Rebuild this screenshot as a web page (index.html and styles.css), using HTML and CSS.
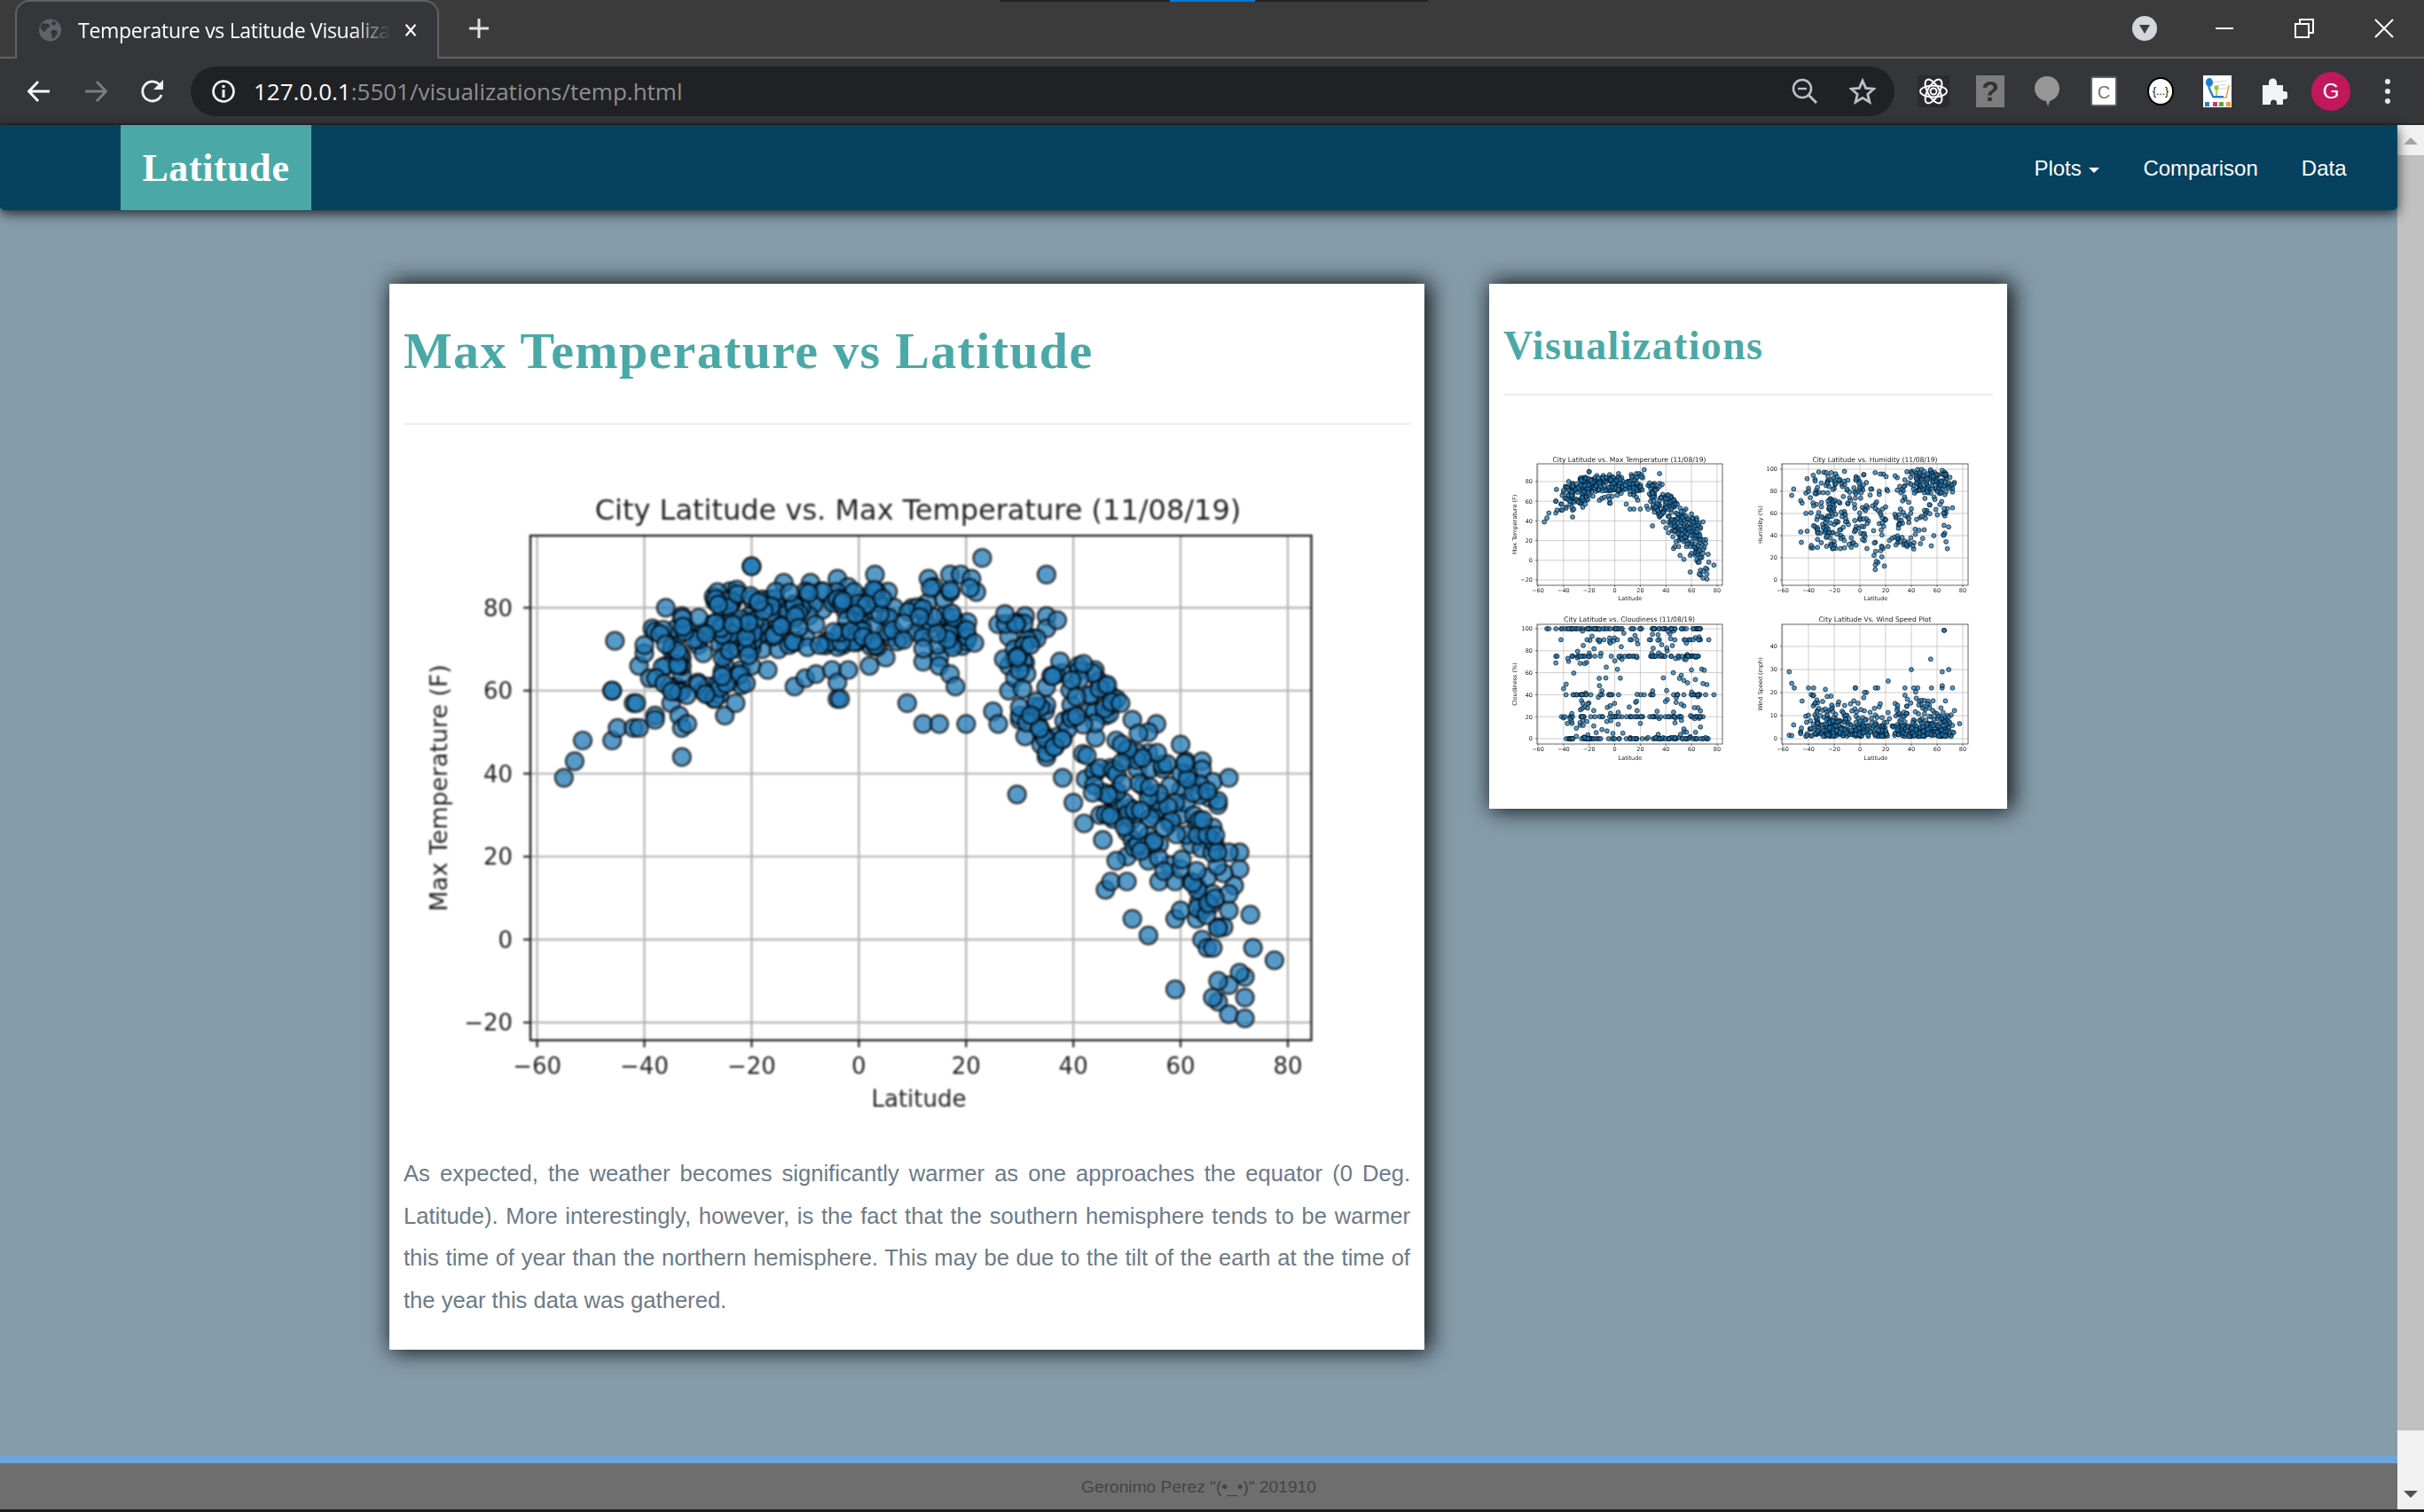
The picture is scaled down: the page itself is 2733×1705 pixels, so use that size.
FILE: index.html
```html
<!DOCTYPE html>
<html lang="en">
<head>
<meta charset="UTF-8" />
<title>Temperature vs Latitude Visualizations</title>
<link rel="stylesheet" href="styles.css">
</head>
<body>
<div class="window">
  <div class="loadbar"><span></span></div>

  <div class="tabstrip">
    <div class="tab">
      <svg class="favicon" width="28" height="28" viewBox="0 0 28 28">
        <circle cx="14" cy="14" r="14" fill="#5f6368"/>
        <path d="M6 5c3 1 5 0 7 2s-1 4-3 5-1 4-3 4-4-3-5-5 2-5 4-6zM17 14c3-1 5 0 6 2s-1 5-3 7-4 2-4 0 0-3-1-5 0-3 2-4zM17 2l5 3-2 3-4-1z" fill="#35363a"/>
      </svg>
      <span class="tab-title">Temperature vs Latitude Visualiza</span>
      <svg class="tab-close" width="18" height="18" viewBox="0 0 18 18"><path d="M3 2l12 14M15 2L3 16" stroke="#fff" stroke-width="2.4"/></svg>
    </div>
    <svg class="newtab" width="26" height="26" viewBox="0 0 26 26"><path d="M13 2v22M2 13h22" stroke="#dfe1e5" stroke-width="3"/></svg>
    <div class="winctl">
      <div class="winbtn"><svg width="28" height="28" viewBox="0 0 28 28"><circle cx="14" cy="14" r="14" fill="#d3d6da"/><path d="M8 10h12l-6 10z" fill="#3b3b3b"/></svg></div>
      <div class="winbtn"><svg width="20" height="4" viewBox="0 0 20 4"><path d="M0 2h20" stroke="#fff" stroke-width="2"/></svg></div>
      <div class="winbtn"><svg width="22" height="22" viewBox="0 0 22 22"><path d="M1 6h15v15H1zM6 6V1h15v15h-5" fill="none" stroke="#fff" stroke-width="2"/></svg></div>
      <div class="winbtn"><svg width="22" height="22" viewBox="0 0 22 22"><path d="M1 1l20 20M21 1L1 21" stroke="#fff" stroke-width="2"/></svg></div>
    </div>
  </div>

  <div class="toolbar">
    <div class="navbtn"><svg width="28" height="28" viewBox="0 0 28 28"><path d="M26 14H3M13 3L2.5 14 13 25" fill="none" stroke="#fff" stroke-width="2.8"/></svg></div>
    <div class="navbtn"><svg width="28" height="28" viewBox="0 0 28 28"><path d="M2 14h23M15 3l10.500 11L15 25" fill="none" stroke="#7c7d80" stroke-width="2.800"/></svg></div>
    <div class="navbtn"><svg width="30" height="30" viewBox="0 0 30 30"><path d="M25 19a11 11 0 1 1-1-10" fill="none" stroke="#f1f3f4" stroke-width="2.800"/><path d="M27 2v11H16z" fill="#f1f3f4"/></svg></div>
    <div class="omnibox">
      <svg width="28" height="28" viewBox="0 0 28 28"><circle cx="14" cy="14" r="11.500" fill="none" stroke="#f1f3f4" stroke-width="2.600"/><path d="M14 12v9" stroke="#f1f3f4" stroke-width="3"/><circle cx="14" cy="8.500" r="1.800" fill="#f1f3f4"/></svg>
      <div class="url">127.0.0.1<span class="url-rest">:5501/visualizations/temp.html</span></div>
      <svg class="omni-ico" width="30" height="30" viewBox="0 0 30 30"><circle cx="12" cy="12" r="10" fill="none" stroke="#bdc1c6" stroke-width="2.600"/><path d="M7 12h10" stroke="#bdc1c6" stroke-width="2.400"/><path d="M19 19l9 9" stroke="#bdc1c6" stroke-width="3"/></svg>
      <svg class="omni-ico" width="30" height="30" viewBox="0 0 30 30"><path d="M15 3l3.600 8.400 9.100.8-6.900 6 2.100 8.900L15 22.400l-7.900 4.700 2.100-8.900-6.900-6 9.100-.8z" fill="none" stroke="#bdc1c6" stroke-width="2.800"/></svg>
    </div>
    <div class="extensions">
      <div class="ext"><svg width="36" height="36" viewBox="0 0 36 36"><rect width="36" height="36" rx="3" fill="#2b2b2f"/><g fill="none" stroke="#fff" stroke-width="2"><ellipse cx="18" cy="18" rx="15" ry="6.500"/><ellipse cx="18" cy="18" rx="15" ry="6.500" transform="rotate(60 18 18)"/><ellipse cx="18" cy="18" rx="15" ry="6.500" transform="rotate(120 18 18)"/><circle cx="18" cy="18" r="3.500"/></g></svg></div>
      <div class="ext"><div class="ext-help">?</div></div>
      <div class="ext"><svg width="30" height="36" viewBox="0 0 30 36"><path d="M15 1c8 0 14 6 14 14 0 7-5 12-11 14l-2 6-2-6C7 28 1 22 1 15 1 7 7 1 15 1z" fill="#979797"/></svg></div>
      <div class="ext"><div class="ext-note">C</div></div>
      <div class="ext"><div class="ext-json">{...}</div></div>
      <div class="ext"><svg width="32" height="36" viewBox="0 0 32 36"><rect width="32" height="36" fill="#fff"/><path d="M10 8l16-2M12 12l15-2M14 16l13-2" stroke="#cfd8d0" stroke-width="1"/><path d="M7 13l5 12h14l3-14" fill="none" stroke="#f09a3e" stroke-width="1.500"/><ellipse cx="7" cy="8" rx="4" ry="5" fill="#1b7fd0"/><path d="M6 13l5 11h12" fill="none" stroke="#1b7fd0" stroke-width="2"/><circle cx="15" cy="14" r="2.500" fill="#8cc63f"/><path d="M15 16v7" stroke="#8cc63f" stroke-width="1.500"/><rect x="2" y="30" width="5" height="5" fill="#2b7fb8"/><rect x="11" y="30" width="5" height="5" fill="#c7337c"/><rect x="18" y="30" width="5" height="5" fill="#5aa53a"/><rect x="26" y="30" width="5" height="5" fill="#ef9a3c"/></svg></div>
      <div class="ext"><svg width="30" height="32" viewBox="0 0 30 32"><path d="M2 9h7V6a4.500 4.500 0 0 1 9 0v3h7v7h2a4.500 4.500 0 0 1 0 9h-2v6h-7v-2a3.500 3.500 0 0 0-7 0v2H2z" fill="#f1f3f4"/></svg></div>
      <div class="ext"><div class="avatar">G</div></div>
      <div class="ext"><svg width="8" height="30" viewBox="0 0 8 30"><circle cx="4" cy="4" r="3" fill="#e8eaed"/><circle cx="4" cy="15" r="3" fill="#e8eaed"/><circle cx="4" cy="26" r="3" fill="#e8eaed"/></svg></div>
    </div>
  </div>

  <div class="viewport">
    <div class="page">
      <nav class="navbar">
        <a class="brand">Latitude</a>
        <ul class="navlinks">
          <li>Plots <span class="caret"></span></li>
          <li>Comparison</li>
          <li>Data</li>
        </ul>
      </nav>

      <main class="content">
        <section class="card card-main">
          <h1>Max Temperature vs Latitude</h1>
          <hr />
          <div id="mainChart" class="main-chart"></div>
          <p>As expected, the weather becomes significantly warmer as one approaches the equator (0 Deg. Latitude). More interestingly, however, is the fact that the southern hemisphere tends to be warmer this time of year than the northern hemisphere. This may be due to the tilt of the earth at the time of the year this data was gathered.</p>
        </section>
        <aside class="card card-side">
          <h2>Visualizations</h2>
          <hr />
          <div class="thumbs">
            <div id="thumbTemp"></div>
            <div id="thumbHumidity"></div>
            <div id="thumbCloud"></div>
            <div id="thumbWind"></div>
          </div>
        </aside>
      </main>

      <footer class="footer">Geronimo Perez "(•_•)" 201910</footer>
    </div>
    <div class="scrollbar">
      <div class="sb-up"></div>
      <div class="sb-thumb"></div>
      <div class="sb-down"></div>
    </div>
  </div>
  <div class="taskbar"></div>
</div>
<script src="charts.js"></script>
</body>
</html>
```
FILE: styles.css
```css
* {
  box-sizing: border-box;
}
body {
  margin: 0;
  font-family: "Liberation Sans", Arial, sans-serif;
  background: #1d1d1d;
}
.window {
  position: relative;
  display: flex;
  flex-direction: column;
  height: 1705px;
  overflow: hidden;
}
.loadbar {
  position: absolute;
  top: 0;
  left: 1127px;
  width: 483px;
  height: 2px;
  background: #222;
}
.loadbar span {
  display: block;
  margin-left: 192px;
  width: 96px;
  height: 2px;
  background: #0a78d4;
}

/* browser frame */
.tabstrip {
  display: flex;
  align-items: center;
  height: 66px;
  padding-left: 17px;
  background: #3b3b3b;
  border-bottom: 2px solid #616265;
}
.tab {
  display: flex;
  align-items: center;
  width: 478px;
  height: 66px;
  margin-top: 1px;
  padding: 0 22px 0 25px;
  background: #35363a;
  border: 2px solid #616265;
  border-bottom: none;
  border-radius: 16px 16px 0 0;
}
.tab-title {
  flex: 1;
  margin-left: 19px;
  white-space: nowrap;
  color: #fff;
  font-family: "Open Sans", sans-serif;
  font-size: 23px;
  letter-spacing: -0.3px;
  -webkit-mask-image: linear-gradient(to right, #000 88%, transparent 100%);
  mask-image: linear-gradient(to right, #000 88%, transparent 100%);
}
.tab-close {
  margin-left: 15px;
}
.newtab {
  margin-left: 32px;
}
.winctl {
  display: flex;
  margin-left: auto;
}
.winbtn {
  display: flex;
  align-items: center;
  justify-content: center;
  width: 90px;
  height: 64px;
}
.toolbar {
  display: flex;
  align-items: center;
  height: 75px;
  padding-left: 12px;
  background: #35363a;
  border-bottom: 2px solid #2a2a2d;
}
.navbtn {
  display: flex;
  align-items: center;
  justify-content: center;
  width: 64px;
}
.omnibox {
  flex: 1;
  display: flex;
  align-items: center;
  gap: 35px;
  height: 56px;
  margin-left: 11px;
  padding: 0 21px 0 23px;
  background: #202124;
  border-radius: 28px;
}
.url {
  flex: 1;
  margin-left: -15px;
  color: #fff;
  font-family: "Open Sans", sans-serif;
  font-size: 26px;
  white-space: nowrap;
}
.url-rest {
  color: #8e8f91;
}
.extensions {
  display: flex;
  margin-left: 12px;
  padding-right: 9px;
}
.ext {
  display: flex;
  align-items: center;
  justify-content: center;
  width: 64px;
  height: 44px;
}
.ext-help {
  width: 32px;
  height: 36px;
  background: #7d7d7d;
  color: #333;
  font-size: 32px;
  font-weight: bold;
  line-height: 36px;
  text-align: center;
}
.ext-note {
  width: 30px;
  height: 34px;
  background: #fff;
  border: 2px solid #5f6063;
  border-radius: 3px;
  color: #777;
  font-size: 20px;
  line-height: 32px;
  text-align: center;
}
.ext-json {
  width: 30px;
  height: 32px;
  background: #fff;
  border: 2px solid #000;
  border-radius: 50%;
  color: #000;
  font-size: 12px;
  line-height: 28px;
  text-align: center;
  white-space: nowrap;
}
.avatar {
  width: 44px;
  height: 44px;
  background: #c2185b;
  border-radius: 50%;
  color: #fff;
  font-size: 24px;
  line-height: 44px;
  text-align: center;
}

/* page */
.viewport {
  flex: 1;
  display: flex;
  min-height: 0;
}
.page {
  flex: 1;
  display: flex;
  flex-direction: column;
  min-width: 0;
  background: #859cab;
}
.navbar {
  position: relative;
  display: flex;
  align-items: stretch;
  justify-content: space-between;
  height: 96px;
  padding-left: 136px;
  padding-right: 33px;
  background: #06415f;
  border-radius: 0 0 5px 5px;
  box-shadow: 0 4px 14px rgba(0, 0, 0, 0.75);
}
.brand {
  display: flex;
  align-items: center;
  justify-content: center;
  width: 215px;
  background: #4aa9a6;
  color: #fff;
  font-family: "Liberation Serif", Georgia, serif;
  font-size: 44px;
  font-weight: bold;
  letter-spacing: 0.6px;
}
.navlinks {
  display: flex;
  align-items: center;
  margin: 0;
  padding: 2px 0 0;
  list-style: none;
  color: #fff;
  font-size: 24px;
}
.navlinks li {
  padding: 0 24.500px;
}
.caret {
  display: inline-block;
  margin-left: 2px;
  vertical-align: middle;
  border-top: 6px solid #fff;
  border-left: 6.500px solid transparent;
  border-right: 6.500px solid transparent;
}
.content {
  flex: 1;
  display: flex;
  align-items: flex-start;
  justify-content: center;
  gap: 73px;
  padding: 83px 1px 0 0;
}
.card {
  padding: 0 16px;
  background: #fff;
  box-shadow: 4px 0 24px 2px rgba(0, 0, 0, 0.9);
}
.card hr {
  margin: 0;
  border: none;
  border-top: 2px solid #eee;
}
.card-main {
  width: 1167px;
  height: 1202px;
}
.card-side {
  width: 584px;
  height: 592px;
}
h1, h2 {
  margin: 0;
  color: #4aa9a6;
  font-family: "Liberation Serif", Georgia, serif;
  font-weight: bold;
}
h1 {
  height: 157px;
  padding-top: 41px;
  font-size: 58px;
  line-height: 70px;
  letter-spacing: 1.330px;
}
h2 {
  height: 124px;
  padding-top: 45px;
  font-size: 46px;
  line-height: 50px;
  letter-spacing: 1.360px;
}
.main-chart {
  height: 760px;
  margin-top: 51px;
  filter: blur(0.9px);
}
.main-chart svg, .thumbs svg {
  display: block;
}
.card-main p {
  margin: 10px 0 0;
  color: #6c7a89;
  font-size: 25.600px;
  line-height: 47.700px;
  text-align: justify;
}
.thumbs {
  display: grid;
  grid-template-columns: 277px 277px;
  grid-auto-rows: 180px;
  margin-top: 54px;
  filter: blur(0.7px);
}
.footer {
  height: 60px;
  padding-top: 8px;
  background: #6e6e6e;
  border-top: 8px solid #6aa6db;
  color: #444;
  font-size: 19.200px;
  line-height: 38px;
  text-align: center;
}
.scrollbar {
  display: flex;
  flex-direction: column;
  width: 30px;
  background: #f1f1f1;
}
.sb-up {
  position: relative;
  height: 34px;
}
.sb-up::after {
  content: "";
  position: absolute;
  top: 14px;
  left: 7px;
  border-bottom: 8px solid #a3a3a3;
  border-left: 8px solid transparent;
  border-right: 8px solid transparent;
}
.sb-thumb {
  height: 1438px;
  background: #c1c1c1;
}
.sb-down {
  flex: 1;
  position: relative;
}
.sb-down::after {
  content: "";
  position: absolute;
  bottom: 13px;
  left: 7px;
  border-top: 8px solid #505050;
  border-left: 8px solid transparent;
  border-right: 8px solid transparent;
}
.taskbar {
  height: 3px;
  background: #1d1d1d;
}
```
FILE: charts.js
```js
// seeded random so the plots come out the same every load
function makeRandom(seed) {
  return function () {
    seed = (seed + 0x6d2b79f5) | 0;
    let t = Math.imul(seed ^ (seed >>> 15), 1 | seed);
    t = (t + Math.imul(t ^ (t >>> 7), 61 | t)) ^ t;
    return ((t ^ (t >>> 14)) >>> 0) / 4294967296;
  };
}

// points read off the reference: [latitude, max temp]
const tempPoints = [
  [-55,39],[-53,43],[-51.5,48],[-46,48],[-46,60],[-46,60],[-45.5,72],[-45,51],[-42,51],[-42,57],[-41.5,57],
  [-41,66],[-41,51],[-40,69],[-40,71],[-39,63],[-38.5,75],[-38,54],[-38,53],[-36,80],[-36,66],[-35,70],[-35,57],
  [-34,73],[-34,75],[-34,61],[-33.5,54],[-33,51],[-33,78],[-33,44],[-33,68],[-33,64],[-33,60],[-32,75],[-32,52],
  [-34,60],[-33,66],[-30,71],[-30,62],[-29,74],[-29,69],[-29,60],[-28,61],[-28,59],[-27,58],[-27,75],[-26,59],
  [-25,69],[-25,54],[-25,66],[-24,82],[-24,77],[-24,84],[-23,57],[-23,75],[-22,65],[-22,73],[-21,77],[-20,90],
  [-20,90],[-20,66],[-20,82],[-19,75],[-18,82],[-18,70],[-17,65],[-17,74],[-16,81],[-15,74],[-15,70],[-14,86],
  [-14,76],[-13,71],[-12,72],[-12,61],[-10,63],[-10,73],[-10,82],[-9,86],[-8,64],[-7,84],[-6,72],[-5,65],[-4,87],
  [-4,62],[-4,58],[-3.5,58],[-3,71],[-3,74],[-2,65],[-2,85],[3,88],[3,84],[2,66],[5,68],[9,57],[12,52],[15,52],
  [20,52],[23,92],[35,88],[17,88],[19,88],[21,87],[25,55],[26,52],[29.5,35],[31,49],[31,78],[35,78],[35,75],[37,77],
  [12,67],[15,68],[15,66],[17,64],[18,61],[13,87],[14,85],[28,66],[26,76],[28,73],[28,60],[29,68],[30,53],[30,54],
  [33,54],[34,47],[35,44],[35,45],[41,66],[44,65],[45,62],[47,58],[43,55],[44,55],[46,54],[48,48],[51,53],[55.500,52],
  [54,50],[54,45],[60,47],[61,43],[64,43],[64,41],[66,38],[69,39],[59,-12],[59,5],[60,7],[51,5],[54,1],[63,5],
  [64,7],[64,0],[65,-2],[66,-2],[67,3],[68,3],[69,7],[72,-9],[71,-8],[69,-11],[67,-10],[67,-15],[66,-14],[72,-14],
  [69,-18],[72,-19],[77.500,-5],[73.500,-2],[73,6],[71,21],[69,21],[71,17],[70,13],[46,12],[47,14],[50,14],[45.500,24],
  [45,30],[42,28],[40,33],[38,39],[50,26],[51,24],[51,29],[54,25],[54,19],[56,14],[56,23],[58,18],[59,14],[60,17],
  [63,13],[65,15],[66,11],[68,16],[69,11],[65,24],[66,27],[63,28],[62,23],[55,30],[58,28],[60,30],[60,36],[62,38],
  [58,37],[61,33],[52,41],[53,37],[52,45],[56,32],[50,20],[48,19],[62,14],[59,33]
];

const fillRandom = makeRandom(17);
for (let i = 0; i < 170; i++) {
  const lat = -28 + fillRandom() * 50;
  tempPoints.push([lat, 70 + fillRandom() * 15]);
}
for (let i = 0; i < 55; i++) {
  tempPoints.push([-38 + fillRandom() * 18, 58 + fillRandom() * 20]);
}
for (let i = 0; i < 170; i++) {
  const lat = 27 + Math.pow(fillRandom(), 1.1) * 40;
  const center = 72 - (lat - 25) * 1.25;
  const spread = lat > 40 ? 34 : 24;
  tempPoints.push([lat, center + (fillRandom() - 0.5) * spread]);
}

const lats = tempPoints.map(p => p[0]);

const humRandom = makeRandom(5);
const humidityPoints = lats.filter((lat, i) => i % 5 !== 0).map(function (lat) {
  if (lat > 40 && humRandom() < 0.65) return [lat, 78 + humRandom() * 22];
  if (lat > 10 && lat < 20 && humRandom() < 0.3) return [lat, 5 + humRandom() * 30];
  return [lat, 28 + humRandom() * 70];
});

const cloudRandom = makeRandom(9);
const cloudRows = [0, 0, 0, 1, 20, 20, 40, 40, 75, 75, 90, 100, 100, 100];
const cloudPoints = lats.filter((lat, i) => i % 6 !== 0).map(function (lat) {
  if (cloudRandom() < 0.72) return [lat, cloudRows[Math.floor(cloudRandom() * cloudRows.length)]];
  return [lat, cloudRandom() * 100];
});

const windRandom = makeRandom(23);
const windPoints = lats.map(function (lat) {
  return [lat, Math.min(22, 1 + -Math.log(1 - windRandom()) * 5)];
});
windPoints.push([-55,29],[-53,24],[-51,22],[65.500,47],[65.500,47],[55,34.500],[40,30],[69,30],[64,29],[22,25],[64,23],[35,22],[12,22]);

function ticks(from, to, step) {
  const out = [];
  for (let v = from; v <= to; v += step) out.push(v);
  return out;
}

function tickText(v) {
  return v < 0 ? "\u2212" + Math.abs(v) : String(v);
}

function drawChart(id, cfg) {
  const x = v => cfg.x0 + (v + 60) * (cfg.x80 - cfg.x0) / 140;
  const y = v => cfg.yA[1] + (v - cfg.yA[0]) * (cfg.yB[1] - cfg.yA[1]) / (cfg.yB[0] - cfg.yA[0]);
  const [l, t, r, b] = cfg.frame;
  let s = `<svg width="${cfg.w}" height="${cfg.h}" viewBox="0 0 ${cfg.w} ${cfg.h}" font-family="'DejaVu Sans', sans-serif" fill="#222">`;

  ticks(-60, 80, 20).forEach(function (v) {
    s += `<line x1="${x(v)}" x2="${x(v)}" y1="${t}" y2="${b}" stroke="#b8b8b8" stroke-width="${cfg.grid}"/>`;
    s += `<line x1="${x(v)}" x2="${x(v)}" y1="${b}" y2="${b + cfg.tick}" stroke="#333" stroke-width="${cfg.grid}"/>`;
    s += `<text x="${x(v)}" y="${cfg.xTickY}" font-size="${cfg.tickFont}" text-anchor="middle">${tickText(v)}</text>`;
  });
  cfg.yTicks.forEach(function (v) {
    s += `<line x1="${l}" x2="${r}" y1="${y(v)}" y2="${y(v)}" stroke="#b8b8b8" stroke-width="${cfg.grid}"/>`;
    s += `<line x1="${l - cfg.tick}" x2="${l}" y1="${y(v)}" y2="${y(v)}" stroke="#333" stroke-width="${cfg.grid}"/>`;
    s += `<text x="${l - cfg.tick * 2.5}" y="${y(v) + cfg.tickFont * 0.36}" font-size="${cfg.tickFont}" text-anchor="end">${tickText(v)}</text>`;
  });

  cfg.points.forEach(function (p) {
    s += `<circle cx="${x(p[0]).toFixed(1)}" cy="${y(p[1]).toFixed(1)}" r="${cfg.r}" fill="#1f77b4" fill-opacity="0.75" stroke="#000" stroke-opacity="0.75" stroke-width="${cfg.stroke}"/>`;
  });

  s += `<rect x="${l}" y="${t}" width="${r - l}" height="${b - t}" fill="none" stroke="#222" stroke-width="${cfg.grid}"/>`;
  s += `<text x="${cfg.titleX}" y="${cfg.titleY}" font-size="${cfg.titleFont}" text-anchor="middle">${cfg.title}</text>`;
  s += `<text x="${cfg.labelX}" y="${cfg.labelY}" font-size="${cfg.labelFont}" text-anchor="middle">Latitude</text>`;
  const ym = (t + b) / 2;
  s += `<text x="${cfg.yLabelX}" y="${ym}" font-size="${cfg.yLabelFont || cfg.labelFont}" text-anchor="middle" transform="rotate(-90 ${cfg.yLabelX} ${ym})">${cfg.ylabel}</text>`;
  s += "</svg>";
  document.getElementById(id).innerHTML = s;
}

drawChart("mainChart", {
  w: 1135, h: 760, frame: [143, 74, 1023.5, 643], x0: 150.6, x80: 997,
  yA: [80, 155.3], yB: [-20, 623], yTicks: ticks(-20, 80, 20), points: tempPoints,
  r: 10, grid: 2.400, stroke: 2.200, tick: 8, tickFont: 26, xTickY: 681,
  title: "City Latitude vs. Max Temperature (11/08/19)", titleX: 580, titleY: 56, titleFont: 32,
  labelX: 581, labelY: 718, labelFont: 26, yLabelFont: 26.800, ylabel: "Max Temperature (F)", yLabelX: 49
});

const thumbBase = {
  w: 277, h: 180, tick: 2, tickFont: 6.500, grid: 0.700, stroke: 0.800, r: 2.500, titleFont: 7.600, labelFont: 6.500,
  xTickY: 168, labelY: 177, labelX: 143, titleX: 142, titleY: 21, yLabelX: 15
};

drawChart("thumbTemp", Object.assign({}, thumbBase, {
  frame: [38, 23, 247, 160], x0: 39, x80: 241, yA: [80, 43], yB: [-20, 154],
  yTicks: ticks(-20, 80, 20), points: tempPoints,
  title: "City Latitude vs. Max Temperature (11/08/19)", ylabel: "Max Temperature (F)"
}));
drawChart("thumbHumidity", Object.assign({}, thumbBase, {
  frame: [37, 23, 247, 160], x0: 38, x80: 241, yA: [100, 29], yB: [0, 154],
  yTicks: ticks(0, 100, 20), points: humidityPoints,
  title: "City Latitude vs. Humidity (11/08/19)", ylabel: "Humidity (%)"
}));
drawChart("thumbCloud", Object.assign({}, thumbBase, {
  frame: [38, 24, 247, 159], x0: 39, x80: 241, yA: [100, 29], yB: [0, 153], xTickY: 167,
  yTicks: ticks(0, 100, 20), points: cloudPoints,
  title: "City Latitude vs. Cloudiness (11/08/19)", ylabel: "Cloudiness (%)"
}));
drawChart("thumbWind", Object.assign({}, thumbBase, {
  frame: [37, 24, 247, 159], x0: 38, x80: 241, yA: [0, 153], yB: [40, 49], xTickY: 167,
  yTicks: ticks(0, 40, 10), points: windPoints,
  title: "City Latitude Vs. Wind Speed Plot", ylabel: "Wind Speed (mph)"
}));
```
